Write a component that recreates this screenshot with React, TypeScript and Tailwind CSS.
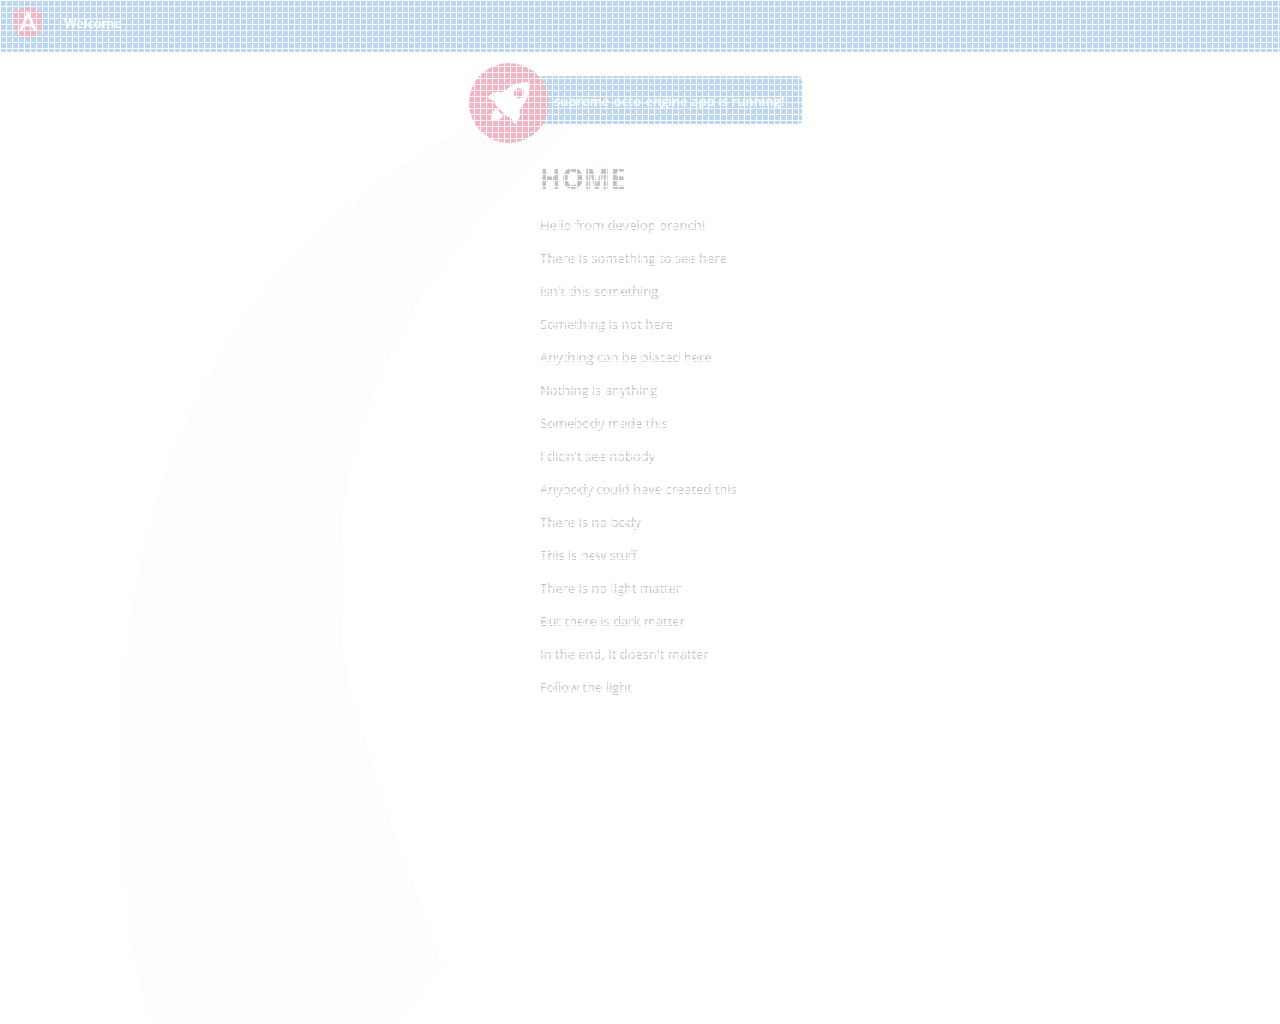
const messages = [
  "Hello from develop branch!",
  "There is something to see here",
  "Isn't this something",
  "Something is not here",
  "Anything can be placed here",
  "Nothing is anything",
  "Somebody made this",
  "I didn't see nobody",
  "Anybody could have created this",
  "There is no body",
  "This is new stuff",
  "There is no light matter",
  "But there is dark matter",
  "In the end, it doesn't matter",
  "Follow the light",
];

function AngularLogo() {
  return (
    <svg className="mx-4 size-10" viewBox="0 0 250 250" role="img" aria-label="Angular Logo">
      <path fill="#dd0031" d="M125 30 31.9 63.2l14.2 123.1L125 230l78.9-43.7 14.2-123.1z" />
      <path
        fill="#fff"
        d="M125 52.1 66.8 182.6h21.7l11.7-29.2h49.4l11.7 29.2H183L125 52.1zm17 83.3h-34l17-40.9 17 40.9z"
      />
    </svg>
  );
}

function Rocket() {
  return (
    <svg
      className="absolute -top-[13px] -left-[9px] size-20"
      viewBox="0 0 101.678 101.678"
      role="img"
      aria-label="Rocket Ship"
    >
      <circle cx="50.839" cy="50.839" r="50.839" fill="#dd0031" />
      <g transform="translate(24.185 24.185)" fill="#fff">
        <path
          transform="translate(0.371 3.363)"
          d="M3.4,42.615a3.084,3.084,0,0,0,3.553,3.553,21.419,21.419,0,0,0,12.215-6.107L9.511,30.4A21.419,21.419,0,0,0,3.4,42.615Z"
        />
        <path d="M53.3,3.221A3.09,3.09,0,0,0,50.081,0,48.227,48.227,0,0,0,18.322,13.437c-6-1.666-14.991-1.221-18.322,7.218A33.892,33.892,0,0,1,9.439,25.1l-.333.666a3.013,3.013,0,0,0,.555,3.553L23.985,43.641a2.9,2.9,0,0,0,3.553.555l.666-.333A33.892,33.892,0,0,1,32.647,53.3c8.55-3.664,8.884-12.326,7.218-18.322A48.227,48.227,0,0,0,53.3,3.221ZM34.424,9.772a6.439,6.439,0,1,1,9.106,9.106,6.368,6.368,0,0,1-9.106,0A6.467,6.467,0,0,1,34.424,9.772Z" />
      </g>
    </svg>
  );
}

function RocketSmoke() {
  return (
    <svg
      className="absolute top-[88px] left-[calc(50%-520px)] -z-10 w-[487px]"
      viewBox="0 0 516.119 1083.632"
      aria-hidden="true"
    >
      <path
        transform="translate(-147.02 -140.939)"
        fill="#f5f5f5"
        d="M644.6,141S143.02,215.537,147.049,870.207s342.774,201.755,342.774,201.755S404.659,847.213,388.815,762.2c-27.116-145.51-11.551-384.124,271.9-609.1C671.15,139.365,644.6,141,644.6,141Z"
      />
    </svg>
  );
}

export default function App() {
  return (
    <div className="relative isolate min-h-screen overflow-hidden bg-white font-['Open_Sans',sans-serif] text-[13px]/[19px] text-[#333]">
      <header className="flex h-13 items-center bg-[#1976d2] pb-2 pr-2 font-semibold text-white">
        <div className="-ml-2">
          <AngularLogo />
        </div>
        <span className="pt-0.5 leading-[22px]">Welcome</span>
      </header>

      <main className="flex flex-col items-center px-4 pt-6">
        <div className="relative flex h-12 items-center rounded bg-[#1976d2] pr-[18px] pl-19 font-semibold text-white">
          <Rocket />
          <span className="pt-0.5 leading-[22px]">supreme-octo-engine app is running!</span>
        </div>

        <section className="mt-9 w-50 whitespace-nowrap">
          <h1 className="mb-5 text-[28px]/[36px] font-bold">HOME</h1>
          <div className="flex flex-col gap-3.5">
            {messages.map((message) => (
              <p key={message}>{message}</p>
            ))}
          </div>
        </section>
      </main>

      <RocketSmoke />

      {/* Washed-out veil with a fine white grid over the whole page */}
      <div className="pointer-events-none absolute inset-0 bg-white/70 bg-[linear-gradient(to_right,white_1px,transparent_1px),linear-gradient(to_bottom,white_1px,transparent_1px)] bg-size-[6px_6px]" />
    </div>
  );
}
